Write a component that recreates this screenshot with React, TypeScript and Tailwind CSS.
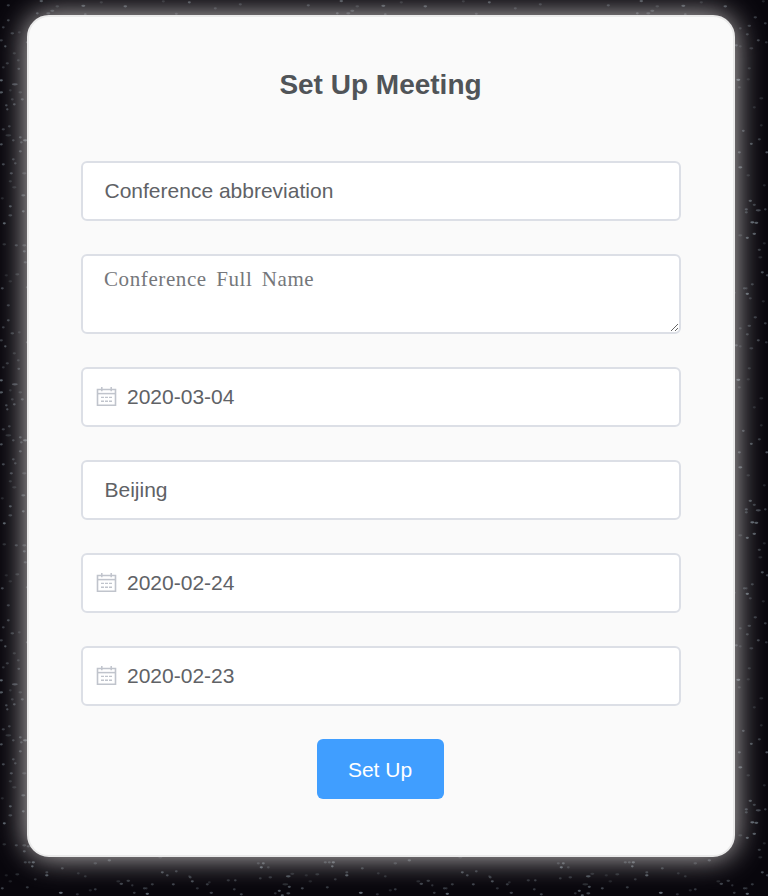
import React from "react";

// x, y, half-width, opacity of every star in one 300px tile of the sky
const STARS: number[][] = [
  [8, 5, 1.6, 0.5], [8, 20, 1.4, 0.6], [3, 27, 1.4, 0.5], [12, 33, 1.8, 0.5], [19, 32, 1.4, 0.3], [5, 46, 1.2, 0.7],
  [1, 40, 1.6, 0.5], [27, 42, 1.4, 0.6], [14, 53, 1.6, 0.35], [18, 60, 1.4, 0.35], [7, 63, 1.6, 0.45], [3, 67, 1.4, 0.4],
  [18.5, 68.5, 1.4, 0.5], [1, 80, 1.6, 0.9], [14.5, 84, 3, 0.6], [1, 92, 1.8, 0.8], [10, 90, 1.4, 0.3], [20, 92, 1.8, 0.35],
  [12, 99, 1.4, 0.4], [22, 99, 1.5, 0.6], [14, 104, 1.4, 0.6], [6, 105, 1.3, 0.6], [7, 109, 1.2, 0.6], [9, 126, 1.4, 0.5],
  [3, 129, 1.6, 0.5], [8, 135, 3, 0.35], [20, 137, 1.4, 0.6], [1, 144, 1.5, 0.7], [13, 140, 1.3, 0.5], [25, 140, 2.2, 0.8],
  [21, 142, 1.3, 0.5], [20, 151, 1.5, 0.6], [13, 159, 1.4, 0.5], [15, 163, 1.3, 0.5], [3, 164, 1.5, 0.6], [11, 173, 1.6, 0.6],
  [24, 173, 2.2, 0.4], [10, 181, 1.6, 0.35], [14, 187, 2.2, 0.3], [23, 195, 2, 0.6], [2, 198, 1.5, 0.3], [10, 206, 1.5, 0.7],
  [23, 211, 1.4, 0.7], [10, 215, 2, 0.5], [4, 223, 1.5, 0.9], [4, 244, 1.8, 0.35], [16, 245, 1.6, 0.5], [24, 245, 2, 0.45],
  [24, 251, 1.5, 0.6], [28, 246, 1.6, 0.5], [25, 262, 1.6, 0.5], [29, 262, 1.5, 0.5], [33, 262, 1.7, 0.8], [32, 266, 1.3, 0.8],
  [62, 268, 1.5, 0.5], [46.5, 272, 1.5, 0.5], [46.5, 275, 1.7, 0.8], [95, 263, 1.8, 0.4], [109, 260, 1.7, 0.6], [78, 273, 1.4, 0.3],
  [85, 276, 1.4, 0.35], [6, 275, 1.6, 0.25], [35, 279, 1.4, 0.4], [17, 274, 2, 0.35], [27, 287, 1.5, 0.5], [2, 288, 1.5, 0.6],
  [10, 281, 1.8, 0.25], [60.5, 292.5, 2, 1], [77, 294, 1.5, 0.4], [90, 290, 1.6, 0.3], [95, 289, 1.4, 0.5], [162, 272, 1.5, 0.7],
  [167, 275, 1.4, 0.6], [176, 271, 1.4, 0.5], [121, 283.5, 1.8, 0.6], [128, 280.5, 1.8, 0.5], [132, 285, 1.2, 0.4], [118, 281, 2, 0.3],
  [144, 288, 1.4, 0.5], [134, 292.5, 1.4, 0.5], [147, 293.5, 1.7, 0.9], [152, 284, 1.5, 0.5], [173, 284, 1.5, 0.6], [150, 298, 1.5, 0.4],
  [190, 277, 1.4, 0.5], [192, 281, 1.5, 0.7], [189, 276, 1.3, 0.3], [197, 288, 1.5, 0.4], [207, 284, 1.5, 0.5], [211, 292.5, 1.7, 0.6],
  [209, 282, 1.4, 0.3], [228, 280, 1.6, 0.4], [235, 280, 1.3, 0.5], [234, 289, 1.4, 0.5], [241, 294, 1.5, 0.6], [258, 263, 1.5, 0.4],
  [263, 263, 1.5, 0.7], [261, 267, 1.6, 0.9], [268, 267, 1.4, 0.4], [260, 278, 1.4, 0.4], [270, 277, 1.8, 0.4], [288, 276, 2.4, 0.7],
  [292, 273.5, 2, 0.3], [279, 290.5, 1.6, 0.8], [289, 286.5, 1.6, 0.7], [288, 293, 2, 0.6], [282, 295, 1.6, 0.8], [275, 293, 1.4, 0.4],
  [285, 284, 3, 0.35], [155, 17, 1.7, 0.5], [149, 25.5, 1.8, 0.5], [140, 28, 1.4, 0.4], [147, 34, 1.5, 0.5], [158, 40, 1.5, 0.6],
  [165, 23, 1.4, 0.5], [136, 45, 1.5, 0.6], [140, 46, 1.4, 0.3], [151, 48, 2, 0.4], [138, 79.5, 2, 0.9], [148, 79, 1.6, 0.25],
  [139, 87, 1.5, 0.35], [149, 68, 1.6, 0.35], [166, 42, 1.4, 0.4], [154, 107, 1.5, 0.3], [161, 98, 2, 0.3], [143, 130.5, 1.4, 0.6],
  [151, 143.5, 1.5, 0.7], [159, 139, 1.5, 0.5], [139, 152, 1.5, 0.7], [166.5, 152, 1.5, 0.7], [140, 167, 2, 0.8], [148, 175, 1.8, 0.3],
  [161, 125, 1.4, 0.3], [164, 185, 1.4, 0.3], [150, 200.5, 1.7, 0.7], [154, 204.5, 1.6, 0.5], [146, 209, 1.6, 0.6], [146, 212, 1.5, 0.5],
  [158, 210, 2.6, 0.6], [165, 209, 1.3, 0.5], [152, 222, 2, 0.9], [156, 222.5, 2, 0.8], [154, 233.5, 1.8, 0.8], [147, 237.5, 1.6, 0.8],
  [140, 235, 2, 0.35], [159, 249.5, 1.6, 0.5], [160, 257, 2, 0.3], [146, 288, 1.3, 0.4], [164, 243, 1.5, 0.3], [41, 0.8, 1.8, 0.7],
  [57, 6, 1.8, 0.35], [83, 5.5, 2, 0.7], [125, 6, 1.8, 0.7], [52, 10.5, 2, 0.5], [48, 13, 2, 0.5], [85, 14, 1.4, 0.5],
  [101, 2, 1.6, 0.3], [189, 2, 1.5, 0.7], [176, 13.5, 1.5, 0.4], [163, 1, 1.5, 0.3], [215, 8, 1.5, 0.4], [240, 4, 1.6, 0.4], [37, 13, 1.4, 0.6],
];

function Starfield() {
  return (
    <svg className="absolute inset-0 h-full w-full" aria-hidden="true">
      <defs>
        <pattern id="stars" width="300" height="300" patternUnits="userSpaceOnUse">
          {STARS.map(([x, y, r, o], i) => (
            <ellipse key={i} cx={x + 0.3} cy={y + 0.3} rx={r} ry="1.1" fill="#84929d" opacity={o * 0.7} />
          ))}
        </pattern>
      </defs>
      <rect width="100%" height="100%" fill="url(#stars)" />
    </svg>
  );
}

function CalendarIcon() {
  return (
    <svg className="-mt-[2px] h-[21px] w-[21px] shrink-0" viewBox="0 0 21 21" fill="none" stroke="#c0c4cc" aria-hidden="true">
      <path d="M1.5 3.5h18v15.7h-18z" strokeWidth="1.6" />
      <path d="M1.5 7.6h18" strokeWidth="1.5" />
      <path d="M5.8 1v4.2M15.2 1v4.2" strokeWidth="1.5" />
      <path d="M5 11.4h3M9 11.4h3M13 11.4h3M5 15.3h3M9 15.3h3M13 15.3h3" strokeWidth="1.4" />
    </svg>
  );
}

const field = "w-full rounded-[6px] border-2 border-[#dcdfe6] bg-white text-[21px]";

function TextField({ value }: { value: string }) {
  return <div className={`${field} flex h-[60px] items-center px-[21.5px] text-[#606266]`}>{value}</div>;
}

function DateField({ value }: { value: string }) {
  return (
    <div className={`${field} flex h-[60px] items-center gap-[10px] pl-[13px] text-[#606266]`}>
      <CalendarIcon />
      <span>{value}</span>
    </div>
  );
}

export default function App() {
  return (
    <div className="relative flex h-[896px] w-[768px] overflow-hidden bg-[#08060c] pl-[27px] pt-[15px] font-['Liberation_Sans',Arial,sans-serif]">
      <Starfield />
      <main className="relative flex h-[842px] w-[708px] flex-col items-center rounded-[22px] border-2 border-[#eaeaea] bg-[#fafafa] px-[52px] shadow-[0_0_30px_#cac6c6]">
        <h1 className="mt-[50px] mr-[1px] text-[28px] leading-[36px] font-bold text-[#505458]">Set Up Meeting</h1>
        <form className="mt-[58px] flex w-full flex-col items-center gap-[33px]">
          <TextField value="Conference abbreviation" />
          <textarea
            className={`${field} block h-[80px] resize-y px-[21px] py-[7.5px] font-['Liberation_Serif',serif] leading-[31px] tracking-[0.6px] [word-spacing:3.5px] text-[#75777b] outline-none`}
            defaultValue="Conference Full Name"
            spellCheck={false}
          />
          <DateField value="2020-03-04" />
          <TextField value="Beijing" />
          <DateField value="2020-02-24" />
          <DateField value="2020-02-23" />
          <button type="button" className="mr-[2px] h-[60px] w-[127px] rounded-[6px] bg-[#409eff] pt-[2px] text-[21px] text-white">
            Set Up
          </button>
        </form>
      </main>
    </div>
  );
}
